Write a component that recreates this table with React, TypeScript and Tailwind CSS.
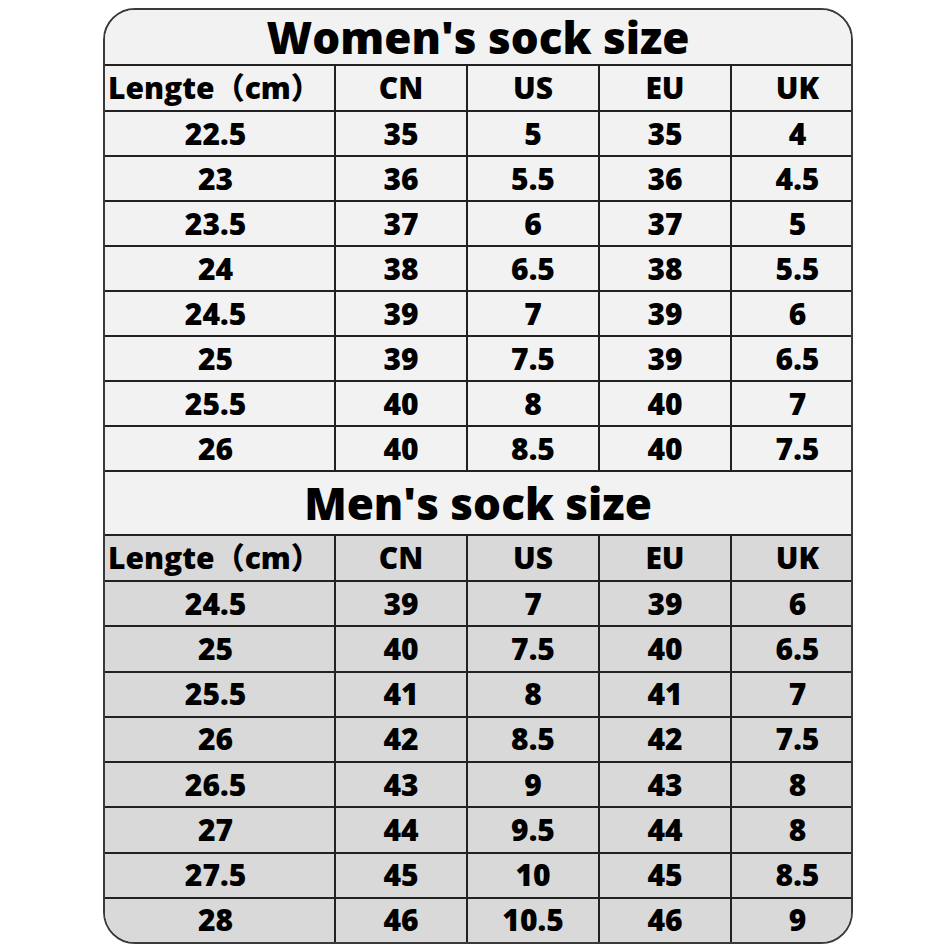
const women = [
  ["22.5", "35", "5", "35", "4"],
  ["23", "36", "5.5", "36", "4.5"],
  ["23.5", "37", "6", "37", "5"],
  ["24", "38", "6.5", "38", "5.5"],
  ["24.5", "39", "7", "39", "6"],
  ["25", "39", "7.5", "39", "6.5"],
  ["25.5", "40", "8", "40", "7"],
  ["26", "40", "8.5", "40", "7.5"],
];

const men = [
  ["24.5", "39", "7", "39", "6"],
  ["25", "40", "7.5", "40", "6.5"],
  ["25.5", "41", "8", "41", "7"],
  ["26", "42", "8.5", "42", "7.5"],
  ["26.5", "43", "9", "43", "8"],
  ["27", "44", "9.5", "44", "8"],
  ["27.5", "45", "10", "45", "8.5"],
  ["28", "46", "10.5", "46", "9"],
];

const header = ["Lengte（cm）", "CN", "US", "EU", "UK"];

// per-column alignment tweaks so the text sits where the chart has it
const colPad = ["pr-[8px]", "", "", "", "pl-[12px]"];

function Row({ cells, bg, height, last }: { cells: string[]; bg: string; height: string; last?: boolean }) {
  return (
    <div className={`grid grid-cols-[231px_132px_132px_132px_1fr] ${height} ${bg} ${last ? "" : "border-b-2 border-[#222]"}`}>
      {cells.map((c, i) => (
        <div
          key={i}
          className={`flex items-center ${i === 0 && c.startsWith("Lengte") ? "justify-start pl-[3px]" : `justify-center ${colPad[i]}`} ${i < 4 ? "border-r-2 border-[#222]" : ""} text-[30px] font-extrabold text-black leading-[38px]`}
        >
          {c}
        </div>
      ))}
    </div>
  );
}

function Title({ text, height }: { text: string; height: string }) {
  return (
    <div className={`${height} flex items-center justify-center bg-[#f2f2f2] border-b-2 border-[#222]`}>
      <span className="text-[44px] font-extrabold text-black leading-[50px]">{text}</span>
    </div>
  );
}

export default function App() {
  return (
    <div
      className="w-[950px] h-[950px] bg-white pt-[8px] pl-[103px]"
      style={{ fontFamily: '"Open Sans", "Noto Sans CJK SC", sans-serif' }}
    >
      <div className="w-[750px] h-[936px] rounded-[32px] border-2 border-[#3a3a3a] overflow-hidden flex flex-col">
        <Title text="Women's sock size" height="h-[56px]" />
        <Row cells={header} bg="bg-[#f2f2f2]" height="h-[46px]" />
        {women.map((r, i) => (
          <Row key={i} cells={r} bg="bg-[#f2f2f2]" height="h-[45px]" />
        ))}
        <Title text="Men's sock size" height="h-[64px]" />
        <Row cells={header} bg="bg-[#d9d9d9]" height="h-[46px]" />
        {men.map((r, i) => (
          <Row key={i} cells={r} bg="bg-[#d9d9d9]" height="flex-1" last={i === men.length - 1} />
        ))}
      </div>
    </div>
  );
}
